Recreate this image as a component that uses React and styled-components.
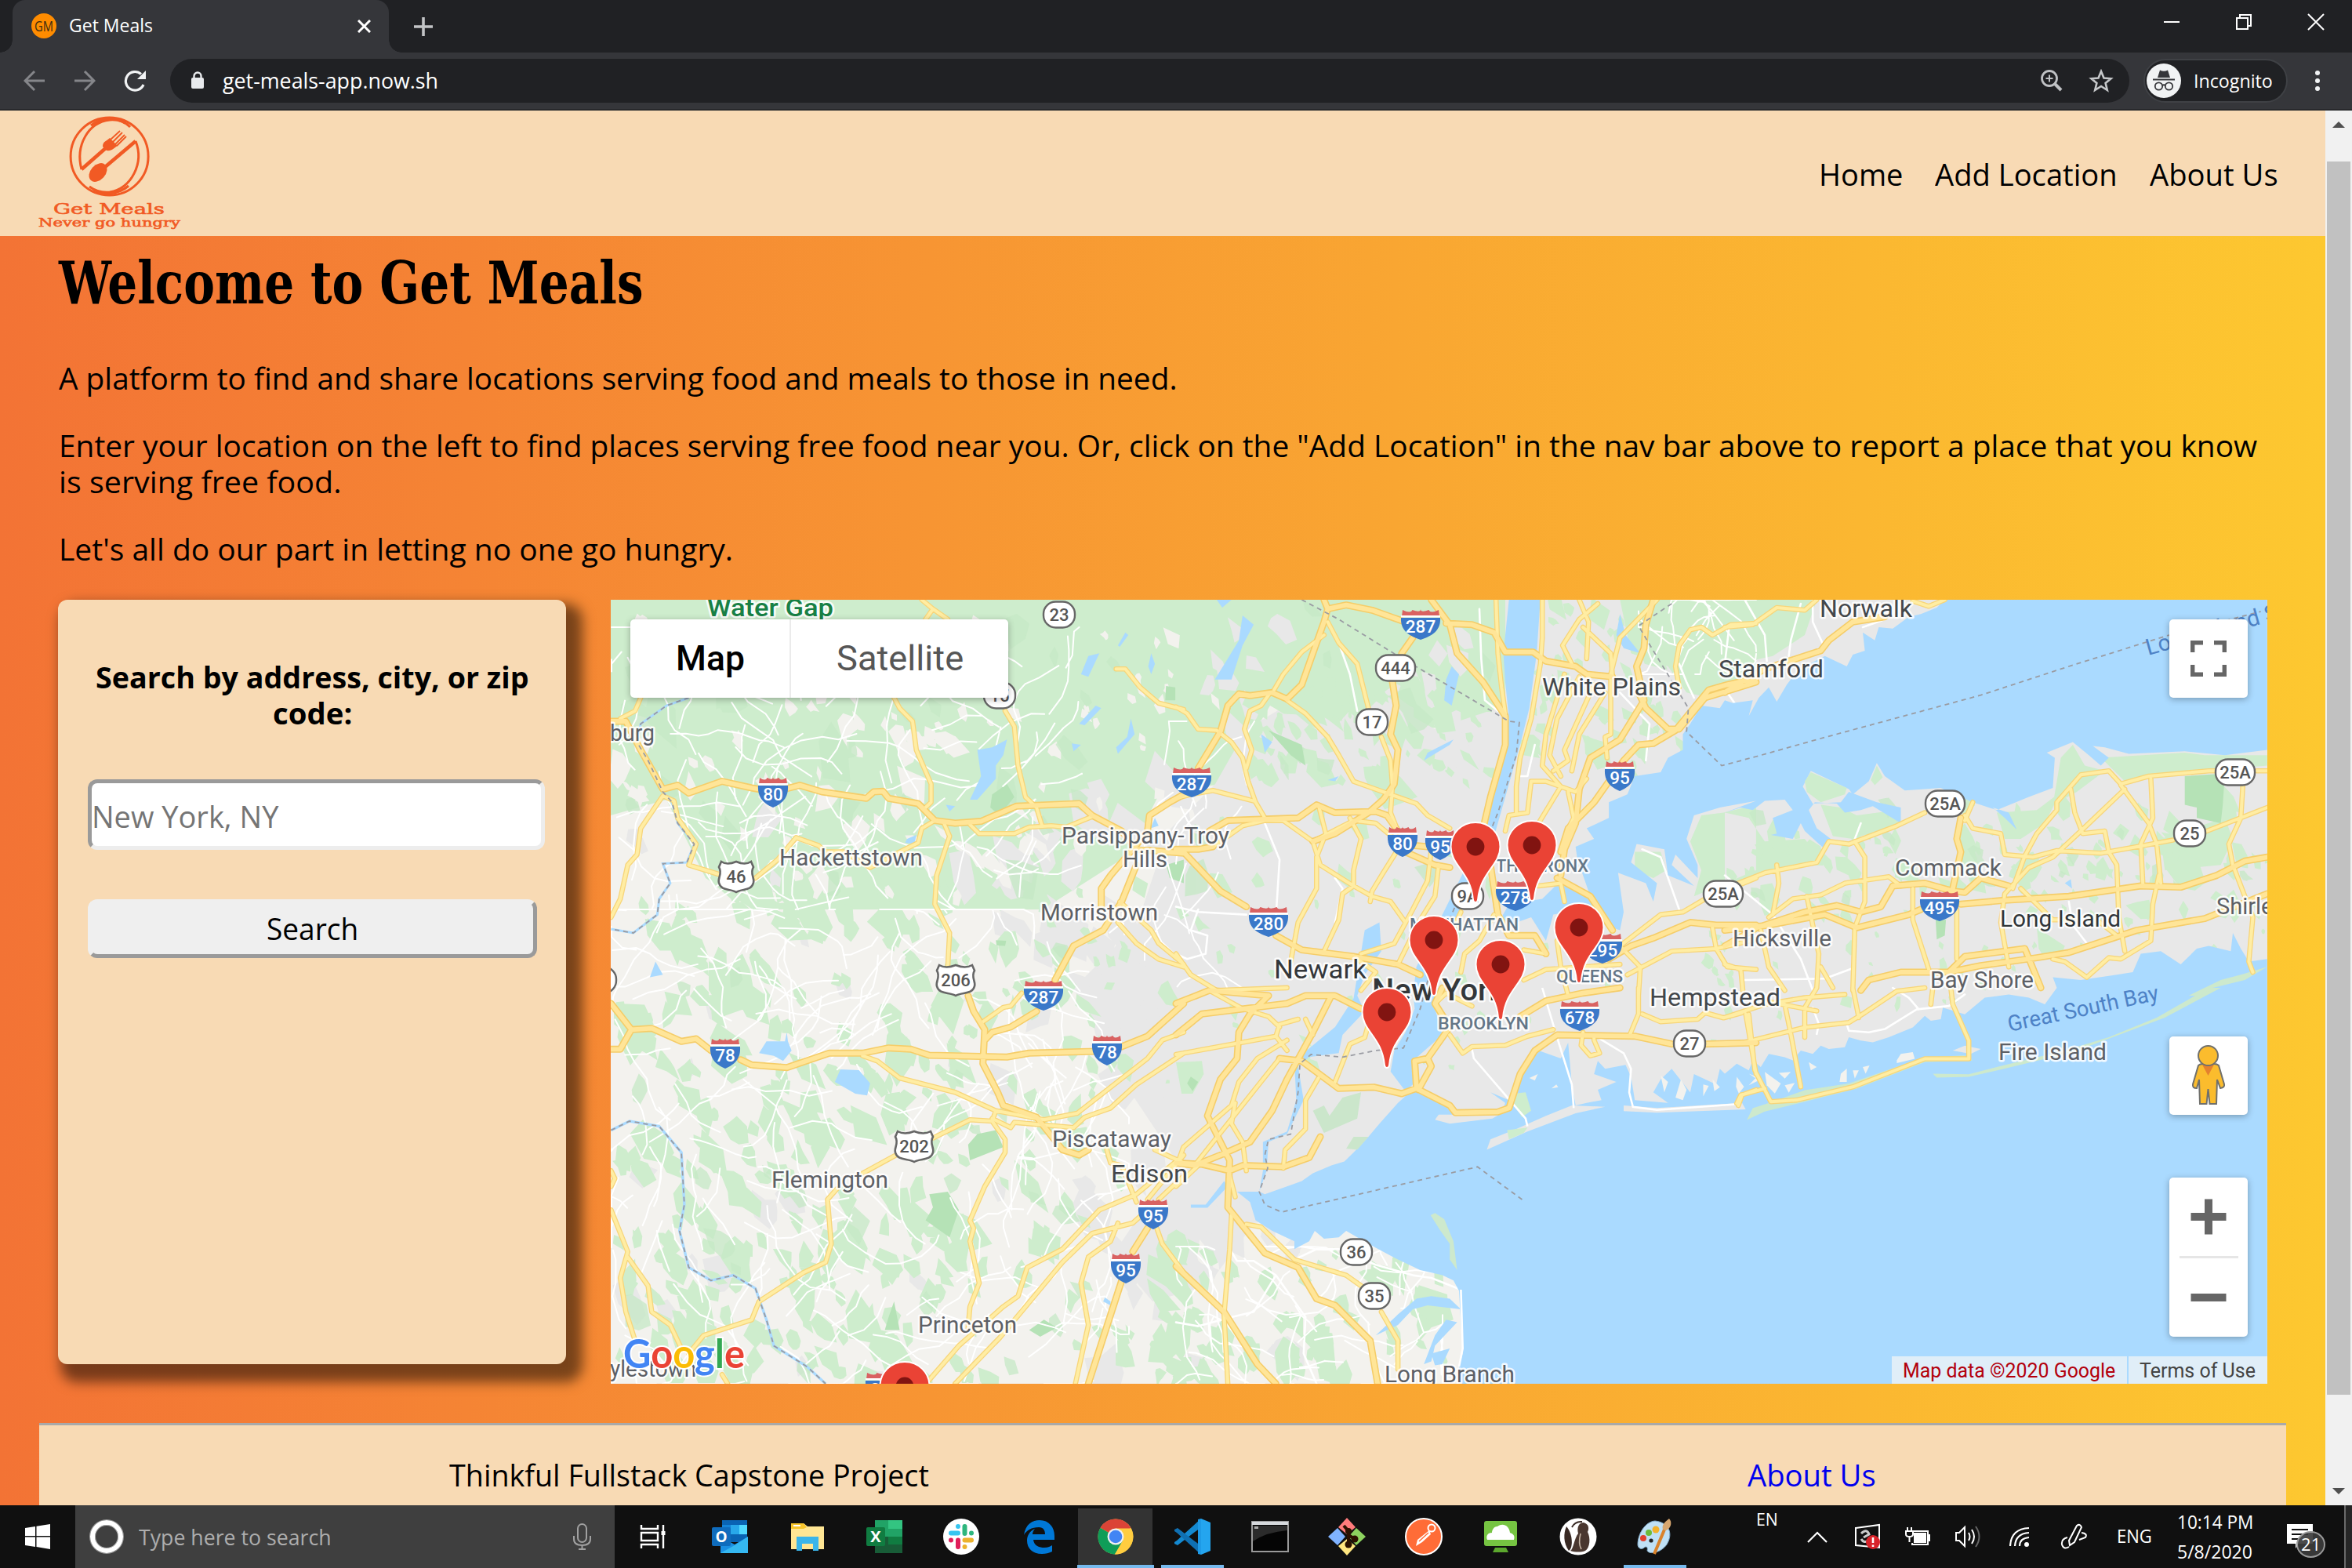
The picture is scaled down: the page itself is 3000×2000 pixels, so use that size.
import React, { useLayoutEffect, useRef, useState } from "react";
import styled, { createGlobalStyle, css } from "styled-components";

const UI = `"Open Sans", "Noto Sans", sans-serif`;
const MAPFONT = `Roboto, "Liberation Sans", sans-serif`;
const cream = "#f8dab4";

const Global = createGlobalStyle`
  html, body { margin: 0; padding: 0; }
  body { width: 3000px; height: 2000px; overflow: hidden; background: #202124; font-family: ${UI}; }
  * { box-sizing: border-box; }
`;

/* ---------- text that keeps a given measure ---------- */
const FitBox = styled.span`
  display: inline-block;
  white-space: nowrap;
  width: ${(p) => p.$w}px;
  text-align: left;
  vertical-align: top;
`;
const FitInner = styled.span`
  display: inline-block;
  transform-origin: 0 50%;
`;
function Fit({ w, children }) {
  const ref = useRef(null);
  const [s, setS] = useState(1);
  useLayoutEffect(() => {
    if (ref.current) setS(w / ref.current.offsetWidth);
  }, [w]);
  return (
    <FitBox $w={w}>
      <FitInner ref={ref} style={{ transform: `scaleX(${s})` }}>{children}</FitInner>
    </FitBox>
  );
}

/* ---------- browser frame ---------- */
const Screen = styled.div`
  width: 3000px;
  height: 2000px;
  display: flex;
  flex-direction: column;
  overflow: hidden;
`;
const TabStrip = styled.div`
  height: 67px;
  background: #202124;
  display: flex;
  padding-left: 16px;
  flex: none;
`;
const Tab = styled.div`
  width: 480px;
  height: 67px;
  background: #35363a;
  border-radius: 16px 16px 0 0;
  display: flex;
  align-items: center;
  padding: 0 23px 1px 24px;
  position: relative;
  color: #fff;
  font-size: 23px;
  line-height: 64px;
  &::before, &::after {
    content: "";
    position: absolute;
    bottom: 0;
    width: 16px;
    height: 16px;
  }
  &::before { left: -16px; background: radial-gradient(circle at 0 0, transparent 15.5px, #35363a 16px); }
  &::after { right: -16px; background: radial-gradient(circle at 100% 0, transparent 15.5px, #35363a 16px); }
`;
const TabTitle = styled.span`
  margin-bottom: 3px;
`;
const Favicon = styled.span`
  width: 32px;
  height: 32px;
  border-radius: 50%;
  background: #ff8c00;
  color: #3c2a10;
  font: 19px/32px ${UI};
  margin-right: 16px;
  display: flex;
  justify-content: center;
`;
const Grow = styled.span`
  flex: 1;
`;
const NewTab = styled.div`
  width: 88px;
  display: flex;
  align-items: center;
  justify-content: center;
`;
const WindowButtons = styled.div`
  display: flex;
  align-items: center;
  height: 56px;
`;
const WindowButton = styled.div`
  width: 92px;
  display: flex;
  justify-content: center;
`;
const Toolbar = styled.div`
  height: 74px;
  flex: none;
  background: #35363a;
  border-bottom: 2px solid #28292c;
  display: flex;
  align-items: center;
  padding-left: 12px;
`;
const ToolButton = styled.div`
  width: 64px;
  display: flex;
  justify-content: center;
`;
const UrlBar = styled.div`
  margin-left: 13px;
  width: 2499px;
  height: 56px;
  border-radius: 28px;
  background: #202124;
  display: flex;
  align-items: center;
  padding: 0 20px 0 26px;
  color: #fff;
  font-size: 27px;
  line-height: 52px;
  gap: 23px;
`;
const UrlIcons = styled.div`
  display: flex;
  gap: 32px;
  align-items: center;
`;
const Incognito = styled.div`
  margin-left: 18px;
  width: 184px;
  height: 56px;
  border-radius: 28px;
  background: #202124;
  border: 2px solid #3f4145;
  display: flex;
  align-items: center;
  color: #fff;
  font-size: 23px;
  line-height: 48px;
  gap: 16px;
  padding-left: 2px;
`;
const Dots = styled.div`
  width: 76px;
  display: flex;
  flex-direction: column;
  gap: 4px;
  align-items: center;
`;
const Dot = styled.i`
  width: 6px;
  height: 6px;
  border-radius: 50%;
  background: #f1f3f4;
`;

/* ---------- page ---------- */
const Viewport = styled.div`
  height: 1779px;
  flex: none;
  display: flex;
  overflow: hidden;
`;
const Page = styled.div`
  width: 2966px;
  background: linear-gradient(to right, #f37335, #fdc830);
  display: flex;
  flex-direction: column;
  overflow: hidden;
`;
const Header = styled.header`
  height: 160px;
  flex: none;
  background: ${cream};
  display: flex;
  justify-content: space-between;
  padding: 0 60px 0 44px;
`;
const Nav = styled.nav`
  display: flex;
  gap: 41px;
  padding-top: 54px;
  font-size: 38px;
  line-height: 54px;
  color: #000;
`;
const Main = styled.main`
  padding: 15px 74px 0 75px;
  flex: none;
  height: 1514px;
`;
const Title = styled.h1`
  margin: 0;
  height: 143px;
  font: bold 75px/91px "DejaVu Serif", serif;
`;
const Para = styled.p`
  margin: 0 0 ${(p) => p.$gap || 40}px;
  font-size: 38px;
  line-height: 46px;
  display: flex;
  flex-direction: column;
`;
const Columns = styled.div`
  display: flex;
  gap: 57px;
  margin-left: -1px;
`;
const Card = styled.section`
  width: 648px;
  height: 975px;
  border-radius: 12px;
  background: ${cream};
  box-shadow: 12px 14px 16px 9px rgba(0, 0, 0, 0.51);
  padding: 75px 27px 0 38px;
  display: flex;
  flex-direction: column;
  align-items: flex-start;
`;
const CardLabel = styled.label`
  width: 573px;
  margin-bottom: 62px;
  font-size: 38px;
  font-weight: 700;
  line-height: 46px;
  display: flex;
  flex-direction: column;
  align-items: center;
`;
const field = css`
  font-family: ${UI};
  font-size: 38px;
  border-radius: 12px;
  border-width: 5px;
`;
const Field = styled.div`
  ${field}
  width: 583px;
  height: 90px;
  background: #fff;
  border-style: solid;
  border-color: #9a9a9a #ededed #ededed #9a9a9a;
  color: #757575;
  line-height: 84px;
`;
const SearchButton = styled.button`
  ${field}
  width: 573px;
  height: 75px;
  margin-top: 63px;
  padding: 0;
  background: #efefef;
  border-style: solid;
  border-color: #efefef #9a9a9a #9a9a9a #efefef;
  color: #000;
  line-height: 63px;
`;
const MapBox = styled.section`
  width: 2113px;
  height: 1000px;
  position: relative;
  overflow: hidden;
`;
const Footer = styled.footer`
  margin: 0 50px;
  height: 140px;
  flex: none;
  border-top: 3px solid #a9a9a9;
  background: ${cream};
  display: flex;
  padding: 36px 523px 0 523px;
  justify-content: space-between;
  font-size: 38px;
  line-height: 54px;
`;
const FooterLink = styled.a`
  color: #0000ee;
`;
const Scrollbar = styled.div`
  width: 34px;
  background: #f1f1f1;
  display: flex;
  flex-direction: column;
  align-items: center;
`;
const Arrow = styled.i`
  width: 0;
  height: 0;
  border: 8px solid transparent;
  ${(p) => (p.$up ? "border-bottom-color:#505050; border-top:0; margin: 14px 0 43px;" : "border-top-color:#505050; border-bottom:0; margin-top:119px;")}
`;
const Thumb = styled.div`
  width: 30px;
  height: 1573px;
  background: #c1c1c1;
`;

/* ---------- map controls ---------- */
const Control = styled.div`
  position: absolute;
  background: #fff;
  border-radius: 5px;
  box-shadow: 0 2px 8px rgba(0, 0, 0, 0.3);
  display: flex;
  align-items: center;
  justify-content: center;
  ${(p) => css`top: ${p.$top}px; height: ${p.$h || 100}px;`}
`;
const TypeControl = styled(Control)`
  left: 25px;
  width: 482px;
`;
const MapType = styled.div`
  height: 100px;
  width: ${(p) => p.$w}px;
  display: flex;
  justify-content: center;
  font: ${(p) => (p.$on ? 500 : 400)} 45px/100px ${MAPFONT};
  color: ${(p) => (p.$on ? "#000" : "#565656")};
  ${(p) => p.$on && "border-right: 2px solid #ebebeb;"}
`;
const SideControl = styled(Control)`
  right: 25px;
  width: 100px;
  flex-direction: column;
`;
const ZoomHalf = styled.div`
  flex: 1;
  display: flex;
  align-items: center;
`;
const ZoomRule = styled.div`
  width: 75px;
  height: 3px;
  background: #e6e6e6;
`;
const Credits = styled.div`
  position: absolute;
  right: 0;
  bottom: 0;
  height: 35px;
  display: flex;
  gap: 2px;
  font: 25px/38px ${MAPFONT};
`;
const Credit = styled.span`
  background: rgba(245, 245, 245, 0.72);
  color: ${(p) => p.$c};
  padding: 0 15px 0 14px;
  height: 35px;
`;

/* ---------- map drawing ---------- */
const sheets = {
  A: [770, 750, 0.4719, 0.3333],
  B: [1500, 750, 0.4719, 0.3333],
  C: [2200, 750, 0.5102, 0.3333],
  D: [770, 1260, 0.4719, 0.3333],
  E: [1500, 1260, 0.4719, 0.3333],
  F: [2200, 1260, 0.5102, 0.4209],
};
function trace(str, close) {
  let t = sheets.A;
  const out = [];
  str.trim().split(/\s+/).forEach((tok) => {
    if (sheets[tok]) { t = sheets[tok]; return; }
    const [x, y] = tok.split(",").map(Number);
    out.push(`${(t[0] + x * t[2]).toFixed(1)} ${(t[1] + y * t[3]).toFixed(1)}`);
  });
  return "M" + out.join("L") + (close ? "Z" : "");
}
const group = (sheet, str) => str.split(";").map((s) => trace(`${sheet} ${s}`)).join("");

function rng(seed) {
  let s = seed;
  return () => {
    s = (s * 1664525 + 1013904223) % 4294967296;
    return s / 4294967296;
  };
}
function patches(seed, n, [x0, y0, x1, y1], r0, r1) {
  const r = rng(seed);
  let d = "";
  for (let i = 0; i < n; i++) {
    const cx = x0 + r() * (x1 - x0);
    const cy = y0 + r() * (y1 - y0);
    const rad = r0 + r() * r() * (r1 - r0);
    const k = 4 + Math.floor(r() * 5);
    const tilt = r() * 3;
    const pts = [];
    for (let j = 0; j < k; j++) {
      const a = (j / k) * 6.283;
      const q = rad * (0.4 + r() * 0.8);
      const px = Math.cos(a) * q * 0.75;
      const py = Math.sin(a) * q * 1.25;
      pts.push(`${(cx + px * Math.cos(tilt * 0.3) + py * Math.sin(tilt * 0.3)).toFixed(1)} ${(cy - px * Math.sin(tilt * 0.3) + py * Math.cos(tilt * 0.3)).toFixed(1)}`);
    }
    d += "M" + pts.join("L") + "Z";
  }
  return d;
}
function lanes(seed, n, [x0, y0, x1, y1], len) {
  const r = rng(seed);
  let d = "";
  for (let i = 0; i < n; i++) {
    let x = x0 + r() * (x1 - x0);
    let y = y0 + r() * (y1 - y0);
    let a = r() * 6.283;
    d += `M${x.toFixed(1)} ${y.toFixed(1)}`;
    const k = 3 + Math.floor(r() * 6);
    for (let j = 0; j < k; j++) {
      a += (r() - 0.5) * 1.1;
      const l = len * (0.4 + r());
      x = Math.min(x1, Math.max(x0, x + Math.cos(a) * l));
      y = Math.min(y1, Math.max(y0, y + Math.sin(a) * l));
      d += `L${x.toFixed(1)} ${y.toFixed(1)}`;
    }
  }
  return d;
}

const water = [
  "C 550,45 530,75 490,100 460,110 420,155 385,150 375,200 345,170 350,240 320,255 305,300 250,260 200,300 170,340 155,370 130,435 110,380 85,420 60,490 70,430 20,440 0,430 B 1470,460 1420,450 1390,520 1370,560 1370,620 1330,650 1310,705 1240,720 1220,790 1170,820 1170,880 1110,920 1130,960 1080,990 1085,1040 1100,1100 1120,1180 1040,1120 990,1190 900,1210 880,1260 900,1290 960,1260 1000,1350 1020,1250 1100,1230 1160,1290 1200,1310 1210,1240 1195,1090 1270,1130 1290,1200 1300,1130 1230,1050 1245,980 1320,1000 1330,1100 1400,1140 1340,1060 1350,1020 1410,1110 1410,1060 1380,960 1400,870 1470,840 1568,815 C 0,860 40,840 70,850 100,815 150,810 170,850 120,880 130,940 115,945 170,960 190,900 200,930 250,1000 265,960 230,920 210,850 225,820 280,825 300,860 340,850 370,835 440,900 440,840 380,820 310,780 290,820 220,825 195,760 215,700 310,770 320,790 360,740 380,670 400,720 450,775 500,770 540,765 560,780 620,820 680,850 760,800 820,765 825,650 805,630 870,590 910,640 940,680 960,650 920,605 950,610 1010,635 1150,625 1250,640 1356,620 1356,45",
  "C 1356,1420 1310,1430 1290,1380 1270,1320 1265,1390 1210,1370 1180,1380 1140,1440 1090,1390 1040,1400 1020,1470 980,1480 890,1500 820,1490 830,1530 F 800,50 760,30 710,20 650,30 600,80 545,60 540,95 515,100 500,85 470,120 410,150 370,165 340,160 310,150 300,180 260,185 240,175 220,200 190,190 170,220 150,210 110,200 90,240 70,220 60,250 30,230 0,260 E 1470,310 1460,370 1400,330 1390,400 1340,310 1310,350 1290,400 1330,440 1240,430 1230,340 1215,295 1160,310 1140,280 1130,330 1190,360 1140,390 1150,430 1110,440 1080,450 1070,370 1060,210 1040,270 980,240 950,300 920,370 900,430 850,400 890,440 880,480 855,500 740,520 700,505 710,485 750,485 720,440 650,390 610,410 620,415 600,440 550,520 520,570 480,630 455,665 420,680 370,710 340,740 300,760 240,790 225,780 165,780 200,820 215,890 260,930 320,970 320,1000 360,970 375,930 400,960 440,955 460,930 520,980 600,1040 660,1080 720,1100 750,1120 765,1160 775,1400 765,1450 770,1520 F 1356,1200",
  "B 900,45 985,45 975,250 955,460 930,600 910,700 880,850 860,950 830,1000 780,1200 700,1400 690,1560 640,1560 650,1450 720,1250 790,1050 850,850 880,650 900,500 890,360 885,250",
  "B 510,1310 550,1280 555,1390 510,1480 490,1560 E 510,90 450,180 440,250 360,265 330,300 345,430 300,560 250,590 245,700 225,780 235,700 235,590 300,550 325,430 320,280 370,220 430,150 480,40",
  "E 640,0 720,0 700,80 720,180 640,280 640,370 620,395 580,320 590,240 620,170 645,80",
  "E 680,1215 640,1230 600,1290 540,1330 600,1250 650,1190 690,1180 740,1190 770,1230",
  "E 730,1270 760,1280 700,1370 690,1430 670,1440 700,1330",
  "E 690,1400 740,1380 720,1440 700,1445",
  "A 1310,260 1340,250 1310,340 1290,330", "A 1010,620 1050,610 1090,580 1080,640 1060,680 1060,730 1010,810 990,810 1020,720",
  "A 1330,450 1345,460 1300,525 1285,520", "A 1425,500 1435,560 1390,635 1385,610 1415,570", "A 1480,250 1490,290 1480,330 1472,300", "A 1410,170 1418,180 1395,225 1390,220",
  "A 820,960 845,945 840,980 815,975", "A 140,1430 160,1480 125,1490", "A 1490,880 1500,910 1478,920", "A 925,830 950,835 935,855", "A 1265,595 1290,600 1270,625",
  "B 180,105 210,140 180,220 150,350 105,350 140,270 170,200", "B 745,300 765,330 745,450 725,430 730,350", "B 750,580 740,600 670,660 680,630", "B 1200,100 1215,180 1255,250 1210,230 1190,180", "B 230,560 260,590 240,630", "B 110,45 150,45 125,75", "B 410,735 440,720 430,740",
  "D 440,205 490,205 495,170 498,205 508,240 485,280 460,260 420,250", "D 640,312 690,315 720,365 712,412 680,405 625,360",
  "D 1355,1185 1370,1200 1370,1215 1350,1200",
  "C 670,840 710,860 730,925 700,880", "C 865,1115 868,1150 850,1130",
  "E 40,830 80,830 130,740 140,760 85,842 40,842",
];
const islands = [
  ["#e8e8e8", "E 840,620 850,580 920,540 1000,490 1070,450 1160,455 1080,480 950,550"],
  ["#ceedcd", "E 895,545 950,535 940,555 900,580"],
  ["#e8e8e8", "E 1210,450 1300,460 1530,440 1540,465 1300,478 1210,472"],
  ["#cde9cd", "F 55,400 70,365 120,345 200,310 310,290 500,210 600,205 620,220 500,225 330,305 200,345 100,375"],
  ["#cde9cd", "F 520,260 610,262 680,240 850,190 960,150 1080,90 1210,0 1240,0 1100,90 980,145 870,195 700,245 610,270 530,272"],
  ["#cde9cd", "C 1160,1560 1240,1500 1290,1480 1356,1450 1300,1500 1220,1530 1190,1560"],
  ["#cde9cd", "E 688,870 700,862 725,885 750,970 760,1080 740,1040 740,980 715,930"],
  ["#f3f2ee", "F 430,220 440,200 470,195 475,215 430,228"],
  ["#e8e8e8", "F 570,190 600,175 640,185 615,200"],
  ["#f3f2ee", "F 290,260 305,245 305,285 287,285"],
  ["#f3f2ee", "F 210,225 230,240 215,250"],
  ["#f3f2ee", "F 320,250 335,250 325,275"],
  ["#f3f2ee", "F 345,240 362,235 352,260"],
  ["#f3f2ee", "F 100,255 140,290 125,320 105,295"],
  ["#f3f2ee", "F 60,260 85,280 60,295 80,270"],
  ["#f3f2ee", "F 135,258 165,255 150,275"],
  ["#f3f2ee", "F 150,295 175,288 160,318"],
  ["#f3f2ee", "F 30,270 48,300 35,320 28,300"],
  ["#f3f2ee", "E 955,345 978,330 970,355"],
  ["#f3f2ee", "E 1015,385 1028,370 1033,380"],
  ["#f3f2ee", "E 1310,335 1330,360 1320,400"],
  ["#f3f2ee", "E 1365,350 1380,390 1370,430 1350,420"],
  ["#f3f2ee", "E 1450,350 1470,380 1455,395"],
  ["#f3f2ee", "E 1425,370 1440,375 1425,415"],
  ["#ceedcd", "C 200,740 215,705 305,765 300,790 240,820 205,780"],
  ["#ceedcd", "C 365,735 380,680 395,725 375,755"],
  ["#ceedcd", "E 910,405 945,400 960,470 935,495 915,450"],
  ["#cbe6cb", "E 500,400 490,500 400,555 370,470 400,450 415,490 450,420"],
  ["#cbe6cb", "E 480,570 520,570 490,620 460,615"],
];
const parks = [
  "E 0,285 70,280 75,330 45,405 15,405",
  "C 780,1300 850,1370 840,1410 800,1420 785,1380",
  "C 840,650 870,600 900,680 950,700 880,780 820,830",
  "C 940,650 1150,630 1200,640 1356,640 1356,680 1200,700 1000,740",
  "C 0,860 60,880 100,970 200,960 240,1040 120,1090 0,1140",
  "C 240,830 290,840 330,870 430,850 440,900 320,960 270,950",
  "B 1568,830 1480,860 1420,870 1390,970 1420,1080 1400,1180 1568,1080",
  "C 1090,960 1250,880 1270,960 1240,1060 1100,1080",
  "C 680,860 780,850 840,780 800,900 740,960 700,960",
  "B 1200,45 1568,45 1568,330 1440,420 1380,400 1330,300 1230,250",
  "C 0,45 230,45 200,180 120,260 0,300",
  "B 1240,1010 1310,1010 1325,1080 1290,1110 1240,1080",
  "E 660,1230 740,1220 750,1270 690,1300 660,1350 650,1290",
];
const deepParks = [
  "C 1150,720 1250,710 1245,830 1240,900 1180,880 1180,840 1150,830",
  "C 527,1270 553,1270 550,1330 530,1345",
  "D 880,790 930,780 960,850 935,955 870,890 890,840",
  "D 1010,560 1060,545 1080,610 990,660 985,600",
  "D 785,1200 800,1310 760,1310 770,1260",
  "D 1190,1270 1225,1300 1180,1335 1150,1310",
  "B 250,545 340,600 350,680 310,640",
  "A 1050,790 1090,750 1110,800 1070,870 1045,840",
  "A 1060,1348 1088,1350 1085,1370 1062,1368",
  "A 1520,1060 1568,1040 1568,1130 1530,1110",
  "E 40,340 60,360 45,395 30,365",
  "A 1520,375 1545,380 1545,430 1518,430",
];
const roads = [
  ["A", "20,1260 45,1190 65,1060 90,1020 100,920 160,795 190,815 200,880 250,980 230,1060 310,1095;410,1110 470,1040 520,955 580,985 600,1010 650,1010 720,1070 800,1010 850,975 860,920 895,890;785,420 800,460 835,510 845,620 885,750 885,820 870,840;920,900 935,950 900,1100 895,1210 935,1320 930,1450;860,45 890,80 930,120;870,120 890,80;1085,470 1110,530 1120,680 1140,800 1170,840 1185,910;990,905 1015,940 1110,940 1150,915 1210,910 1250,915 1320,875;1385,310 1410,310 1450,380 1500,440 1568,465;1395,1200 1480,1310 1500,1360 1568,1440;1390,1280 1440,1360 1500,1420 1568,1450;45,500 85,470 100,420"],
  ["B", "0,455 30,480 60,540 110,545 150,590 180,650 195,740 215,820 240,880;265,390 290,330 340,245 400,180;410,130 440,210 490,290 520,460;555,570 580,660 585,760 580,860 600,930;300,430 350,480 410,570 440,640 480,740 560,780 650,825 680,870 740,920;255,400 230,450 200,470 185,540 205,620 190,690;0,805 40,790 100,775 210,815;60,1000 100,990 180,910 240,890 290,890 370,970 480,890 540,900 600,970;370,970 390,1060 480,1140 530,1180 580,1200 620,1280;385,830 405,940 380,1030 380,1150 330,1280 310,1430;470,880 500,960 480,1080 480,1140 450,1170 440,1270 400,1390;600,1000 560,1090 530,1160 525,1200;690,1000 680,1120 640,1230 590,1360 500,1400;710,1060 700,1180 660,1270 600,1440;865,45 870,250 880,380 890,480;990,45 990,190 985,290 960,500 930,650 920,760 920,860;1090,45 1115,130 1110,270;1140,60 1090,120 1045,220 1070,290;1100,150 1175,250 1180,340;1300,45 1200,190 1175,330 1175,560 1160,570 1165,650;1568,135 1500,140 1450,180 1420,150 1390,160 1360,220 1350,300 1360,380;1050,330 1000,560 990,680 1040,760 980,900;1090,340 1030,500 1010,640 1040,720;1130,370 1050,620 1060,660 1020,700;1160,400 1090,560 1070,700;1060,780 1075,880 1060,920;960,740 1000,740 1080,780 1110,730;960,740 950,860 900,870 890,930;980,1140 1040,1130 1050,1200;770,1240 740,1330;860,1250 820,1350 780,1400 770,1470;1000,1400 940,1385;1568,1110 1430,1190 1370,1240 1310,1250 1200,1370;1568,1345 1460,1380 1340,1390 1220,1480;1450,1300 1460,1380 1490,1450 1568,1460;940,1500 1000,1460 1100,1450 1200,1440;1030,1350 1040,1450 1060,1560;1200,1370 1255,1450 1250,1560;0,1400 40,1480 110,1540 300,1530;480,1410 540,1470 500,1540"],
  ["C", "0,150 70,140 130,75 200,85 230,45;470,50 510,70 550,45;0,1150 100,1090 230,1050 260,970 310,980 430,910 500,860;600,870 620,920 690,940 700,1020 770,1030 830,1005 940,1015 1050,985 1120,965;1205,930 1356,840;620,820 600,890;750,1025 780,940 830,850 830,820 890,715 960,700 990,750 1060,720 1210,700 1240,700;1330,700 1356,700;990,755 1060,900 1080,980 1090,1130;865,770 875,860 895,940 950,930 960,1010 980,1060 985,1260 1000,1390;1000,770 890,930 820,1030 760,1070 700,1170 690,1280 710,1450;750,1025 720,1150;1065,730 1070,880 1040,980 1045,1130;1295,760 1290,880 1260,980 1270,1060 1320,1260 1310,1430 1320,1470;110,1260 170,1190 240,1175 300,1130 410,1105 440,1140;580,1230 580,1420;470,1150 470,1270 510,1460;325,970 350,1030 350,1200 325,1300 320,1540;205,1180 235,1400 230,1530;130,1060 135,1130 120,1250;90,1310 110,1450 150,1540;820,1420 850,1430 905,1490 960,1415 990,1420 1065,1350 1070,1210 1085,1100;0,1440 40,1460 45,1540;240,1450 270,1530;740,1150 820,1270 870,1270;930,1270 980,1330"],
  ["F", "0,170 50,165 200,120 310,105 350,75 430,10 500,0;60,80 75,250 115,345 180,340 320,300 500,215 610,215 610,160 570,50 565,0;150,50 165,140 190,300;0,90 100,50 200,30 300,20;200,150 200,60 230,0;30,350 40,325 100,305;320,0 335,90;515,50 520,0;100,40 230,70"],
  ["D", "700,260 740,280 800,345 950,400 1060,470 1190,505 1280,480 1470,270 1510,200 1568,170;1025,130 1080,75 1100,70 1130,20;890,575 990,505 1050,510 1060,470;1050,510 1085,580 1085,630 1030,760 990,890 1000,920 990,970 1015,1130 990,1220 985,1300;1050,500 1100,535 1110,515 1270,535 1300,495 1370,460 1440,370 1568,250;700,710 790,640;630,770 605,810 615,980 600,1050 540,1090 420,1200 400,1270 270,1330 230,1400;20,700 30,730 20,760;20,850 65,1010 45,1110 60,1240 85,1350;65,1030 120,1140 130,1240 180,1290 210,1380;320,1480 335,1515;880,1500 960,1370 1080,1220 1120,1180 1145,1070 1240,1000 1340,850 1440,790 1568,640;950,1515 1070,1340 1240,1050 1320,940 1430,900 1470,850;1275,1515 1310,1290 1290,1130 1310,1030 1370,970 1390,900;1495,920 1510,980 1568,1090;1360,620 1370,670 1400,680 1440,820;1500,810 1568,720;1490,620 1568,670;1470,810 1568,640"],
  ["E", "0,255 270,185 280,140 330,120;270,185 300,240;10,650 20,610 150,450 170,360 220,270 300,200;430,360 470,215 510,190 520,140;385,345 350,430 350,540 295,620 290,690;150,870 145,1000 130,1250 140,1515;190,905 230,915 320,1040 460,1100 500,1140;555,1240 600,1350 600,1460;740,180 775,250 800,225 890,220 950,185 1020,160;1250,0 1250,100 1225,185;1260,100 1310,130 1410,120 1430,95 1480,115 1530,95;1540,100 1568,330;1100,170 1095,220 1120,260 1145,250 1130,200 1130,180;1520,450 1530,410 1568,390;50,680 280,270;140,690 160,800;190,700 180,590 150,520 160,440;350,120 370,180;0,760 60,680;90,10 180,80 250,110 280,150;700,60 730,20 800,70"],
];
const highways = [
  ["A", "20,510 60,510 100,620 160,770 200,755 230,785 320,740 400,765 460,780 530,755 590,780 710,805 730,780 755,778 770,805 850,825 895,890 950,900 1020,893 1115,835 1285,825 1320,870 1400,930 1440,1000 1568,1015;1568,790 1530,820 1475,870 1470,930 1430,1000 1370,1100 1345,1150 1345,1220;1440,1060 1400,1200 1350,1310 1270,1370 1220,1500"],
  ["B", "60,690 90,620 120,550 140,450 170,405 200,412 260,400 300,425 340,370 370,250 400,130 410,80 400,45;410,80 460,65 530,85 600,120 640,140;610,250 640,190;585,360 595,450 580,560 600,620 590,750 560,810 520,860 430,940 370,970;730,135 800,140 860,170 890,245 965,245 1000,280 1080,300 1110,330 1180,340;690,45 740,140 760,250 830,360 890,490 890,600 850,800 830,920;90,930 140,890 330,880 380,830 430,860 540,855 570,870 600,930;0,1000 60,1000 100,990;20,1010 60,1070 120,1160 190,1220;270,1330 340,1385 480,1410 600,1440 660,1480;620,1010 700,1060 740,1070;640,985 680,990;1290,45 1270,140 1265,230 1245,300 1265,430 1200,580 1120,650 1090,770 1080,900 1050,1000 1040,1100;1568,360 1500,390 1430,420 1360,540 1330,540 1270,460 1250,400;1568,345 1490,370 1440,390 1350,545 1290,595 1250,600 1210,660 1130,820 1060,920 1040,1010;850,1060 870,1250 900,1330 970,1330 1000,1400;1030,1110 1120,1180 1180,1310;1568,1290 1460,1290 1390,1280 1290,1340 1230,1370 1170,1420"],
  ["C", "0,400 30,370 100,310 180,270 240,240 260,200 320,130 400,110;590,880 580,960 590,1010 570,1150;590,1210 700,1195 860,1180 1040,1140 1140,1145 1230,1100 1300,1045 1356,1030;0,1310 110,1290 250,1250 330,1300 460,1250 490,1230;0,1370 80,1300 200,1240 280,1215 340,1240 390,1220 420,1140 500,1130 570,1160 600,1165 640,1110 710,1140;560,1470 600,1410 750,1380 790,1530;340,1540 360,1500 440,1470 560,1470 640,1445 780,1415 860,1395 1030,1310 1200,1265 1356,1170"],
  ["D", "20,60 75,160 130,155 210,205 250,195 290,240;20,235 45,235 75,160;370,275 400,295 495,305 610,250 700,250 770,230 830,235 880,258 1090,265 1150,250 1330,243;1400,225 1470,185 1568,60;985,30 1000,90 1030,160 1025,290 1065,400 1080,450 1170,495 1240,620 1285,640 1310,620;1030,200 1050,170 1100,150 1170,90;1310,1515 1400,1120;1430,1010 1470,920"],
  ["E", "0,60 90,10 250,30;0,180 70,100 300,60 350,30 430,30 500,80;250,30 200,100 170,170 165,270 120,350 85,490 145,660 140,840 180,910 240,1015 330,1070 380,1190 430,1215 525,1350 545,1515;420,30 370,170 300,350 260,470 200,590 120,640 50,680 0,670;280,270 340,280 440,385 535,380 610,405 650,385 740,450 755,478 870,475 900,460 930,330 970,240 1030,180 1240,185 1340,215;1430,215 1568,210;0,670 70,675 145,700 180,680 290,685 360,650 390,570;0,1065 130,1240 220,1440 270,1515;650,380 645,280 680,270 690,300 655,390;680,270 740,150 700,60 720,0;930,110 1000,50 1100,20 1200,0"],
];
const whiteRoads = [
  ["E", "150,1010 165,1045 210,1045 270,1100 350,1260;320,1040 380,1000 440,1000 540,1060 640,1100 690,1110 770,1155;0,1280 60,1295 150,1260 210,1240 270,1100;350,1260 345,1400 380,1515"],
  ["B", "820,80 825,270 835,430 870,470;440,210 470,330 490,470;240,900 280,1040 270,1260 260,1330;430,1110 450,1150 430,1280;1568,560 1490,400;1360,290 1380,360 1400,420;1260,1000 1310,1030 1360,1230;970,600 950,720 930,720;0,1220 60,1240 190,1250;0,1400 30,1420 80,1400 85,1330 40,1310 60,1230;1200,400 1280,520 1270,660"],
  ["C", "10,160 0,290;50,45 100,180 105,280;190,60 165,200 160,260;220,45 220,130 250,230;345,150 400,120;0,1100 120,1250 190,1420 220,1540;50,1500 250,1495 320,1455;320,980 340,900;860,1200 870,1290 905,1360"],
  ["F", "305,110 310,130 360,135 400,125 480,65 560,55 600,20;220,60 235,110 230,140;420,0 460,30 485,65;610,220 615,260"],
];
const causeways = "800,235 805,270 890,410 945,500 950,530;990,0 1030,190 1070,370 1075,460;1140,190 1210,250 1230,310 1225,400 1235,455 1300,467 1520,445;770,1155 775,1380 765,1450";
const dashed = [
  "A 230,420 170,450 100,520 90,590 120,660 160,780 185,820 200,900 245,980 225,1050 160,1055 180,1130 150,1190 145,1250 80,1320 20,1305",
  "B 340,45 440,120 600,260 780,410 900,510 928,515 920,640 870,860 830,1000 760,1200 700,1400 E 660,80 615,230 540,240 450,265 365,255 335,290 330,400 310,560 250,580 240,640 248,690 225,780 240,830 285,858 815,685 940,815",
  "B 1340,60 1250,145 1290,240 1385,460 1380,550 1475,680 1568,645 C 230,580 640,410 860,300 1100,185 1340,90",
  "D 20,545 70,510 150,530 210,630 218,830 205,930 230,1070 290,1120 350,1100 410,1150 440,1270 460,1370 550,1450 600,1515",
];

const townGrey = "#5d6066";
const darkTown = "#43474b";
/* text, x start, width (0 = natural), baseline, size, colour, weight */
const places = [
  ["Water Gap", 902, 161, 786, 31, "#188045", 500],
  ["burg", 778, 57, 945, 29, townGrey],
  ["Hackettstown", 994, 183, 1104, 29, townGrey],
  ["Parsippany-Troy", 1354, 214, 1076, 29, townGrey],
  ["Hills", 1432, 57, 1106, 29, townGrey],
  ["Morristown", 1327, 150, 1174, 29, townGrey],
  ["White Plains", 1967, 177, 887, 31, darkTown],
  ["Stamford", 2192, 134, 864, 31, darkTown],
  ["Norwalk", 2321, 118, 787, 31, darkTown],
  ["THE BRONX", 1908, 118, 1112, 22, "#647687", 500],
  ["MANHATTAN", 1798, 139, 1187, 22, "#647687", 500],
  ["QUEENS", 1985, 85, 1253, 22, "#647687", 500],
  ["BROOKLYN", 1834, 116, 1313, 22, "#647687", 500],
  ["Newark", 1625, 118, 1248, 33, "#34373a"],
  ["New York", 1750, 170, 1276, 38, "#34373a", 500],
  ["Hempstead", 2104, 167, 1283, 31, darkTown],
  ["Hicksville", 2210, 126, 1207, 29, townGrey],
  ["Commack", 2417, 136, 1117, 29, townGrey],
  ["Long Island", 2551, 154, 1182, 30, "#30353a"],
  ["Shirley", 2827, 0, 1166, 29, townGrey],
  ["Bay Shore", 2462, 132, 1260, 29, townGrey],
  ["Fire Island", 2549, 138, 1352, 30, townGrey],
  ["Piscataway", 1342, 152, 1463, 29, townGrey],
  ["Edison", 1417, 98, 1508, 31, darkTown],
  ["Flemington", 984, 149, 1515, 29, townGrey],
  ["Princeton", 1171, 126, 1700, 29, townGrey],
  ["ylestown", 778, 110, 1756, 29, townGrey],
  ["Long Branch", 1766, 166, 1763, 30, townGrey],
];
const interstates = [
  ["80", 986, 1010], ["287", 1520, 997], ["287", 1812, 796], ["287", 1331, 1269], ["80", 1789, 1073], ["95", 1837, 1077],
  ["95", 2066, 989], ["278", 1933, 1142], ["280", 1618, 1175], ["295", 2044, 1209], ["678", 2015, 1295], ["495", 2474, 1155],
  ["78", 925, 1343], ["78", 1412, 1339], ["95", 1471, 1548], ["95", 1436, 1617], ["295", 1129, 1769],
];
const usRoutes = [["46", 939, 1118], ["206", 1219, 1250], ["202", 1166, 1462]];
const stateRoutes = [
  ["23", 1351, 784], ["15", 1275, 887], ["444", 1780, 852], ["17", 1750, 921], ["9A", 1872, 1143], ["25A", 2198, 1140],
  ["25A", 2481, 1025], ["25A", 2851, 985], ["25", 2793, 1063], ["27", 2155, 1331], ["36", 1730, 1597], ["35", 1753, 1653],
  ["", 766, 1250],
];
const pins = [[1882, 1048], [1954, 1046], [2014, 1151], [1829, 1167], [1914, 1198], [1154, 1736], [1769, 1259]];

function Interstate({ n, x, y }) {
  const w = n.length > 2 ? 25 : 19;
  return (
    <g transform={`translate(${x} ${y})`}>
      <path d={`M${-w + 1} -10 L${-w + 2} -18 Q${-w / 2} -13 ${-w / 2 + 2} -18 Q0 -14 0 -19 Q0 -14 ${w / 2 - 2} -18 Q${w / 2} -13 ${w - 2} -18 L${w - 1} -10Z`} fill="#d96262" />
      <path d={`M${-w} -8 H${w} C${w + 1} 8 ${w * 0.6} 15 0 20 C${-w * 0.6} 15 ${-w - 1} 8 ${-w} -8Z`} fill="#3a78c9" />
      <rect x={-w} y="-11" width={2 * w} height="2.4" fill="#fff" />
      <text y="11" textAnchor="middle" fontFamily={MAPFONT} fontWeight="500" fontSize="22.500" fill="#fff">{n}</text>
    </g>
  );
}
function UsRoute({ n, x, y }) {
  const w = n.length > 2 ? 25 : 23;
  return (
    <g transform={`translate(${x} ${y})`}>
      <path d={`M${-w + 4} -19 Q${-w / 2} -14 0 -19 Q${w / 2} -14 ${w - 4} -19 L${w - 1} -12 C${w - 6} -4 ${w + 1} 2 ${w - 1} 8 C${w - 4} 19 8 15 0 20 C-8 15 ${-w + 4} 19 ${-w + 1} 8 C${-w - 1} 2 ${-w + 6} -4 ${-w + 1} -12Z`} fill="#fff" stroke="#676767" strokeWidth="2.6" />
      <text y="8" textAnchor="middle" fontFamily={MAPFONT} fontWeight="500" fontSize="22" fill="#555">{n}</text>
    </g>
  );
}
function StateRoute({ n, x, y }) {
  const w = n.length > 2 ? 50 : 40;
  return (
    <g transform={`translate(${x} ${y})`}>
      <rect x={-w / 2} y="-16.500" width={w} height="33" rx="15.500" fill="#fff" stroke="#676767" strokeWidth="2.4" />
      <text y="8" textAnchor="middle" fontFamily={MAPFONT} fontWeight="500" fontSize="22" fill="#555">{n}</text>
    </g>
  );
}
function Pin({ x, y }) {
  return (
    <g transform={`translate(${x} ${y})`}>
      <path d="M0 1 C18 1 31.500 15 31.500 32 C31.500 56 6 64 3 100 C2 104 -2 104 -3 100 C-6 64 -31.500 56 -31.500 32 C-31.500 15 -18 1 0 1Z" fill="#ea4335" stroke="#fff" strokeWidth="2" />
      <circle cx="0" cy="32" r="11.4" fill="#811411" />
    </g>
  );
}

const roadPath = roads.map(([t, s]) => group(t, s)).join("");
const highwayPath = highways.map(([t, s]) => group(t, s)).join("");
const whitePath = whiteRoads.map(([t, s]) => group(t, s)).join("");
const shape = (list) => list.map((s) => trace(s, true)).join("");

function Terrain() {
  return (
    <svg width="2113" height="1000" viewBox="779 765 2113 1000" style={{ display: "block" }}>
      <rect x="779" y="765" width="2113" height="1000" fill="#f3f2ee" />
      <path d="M779 765H1925L1920 920L1700 940L1620 900L1560 1000L1480 1010L1440 1090L1330 1160H1030L960 1160L900 1120L850 1020L779 1040Z" fill="#ceedcd" />
      <path d="M1550 1000L1590 930L1640 900L1700 950L1760 890L1830 930L1920 900L1920 765H2892V1500H1900L1600 1560L1540 1640L1470 1660L1420 1600L1500 1480L1400 1330L1380 1250L1450 1180L1490 1060Z" fill="#e8e8e8" />
      <g fill="#e8e8e8">
        <path d={patches(5, 26, [1250, 1000, 1560, 1400], 20, 70)} />
        <path d={patches(6, 24, [800, 1000, 1300, 1765], 12, 34)} />
        <path d={patches(8, 24, [1540, 800, 1920, 960], 14, 42)} />
        <path d={patches(9, 22, [1380, 1480, 1680, 1765], 16, 50)} />
      </g>
      <path d={shape(parks)} fill="#ceedcd" />
      <g fill="#f3f2ee">
        <path d={patches(11, 34, [785, 790, 1330, 940], 6, 22)} />
        <path d={patches(13, 62, [785, 930, 1330, 1150], 8, 30)} />
        <path d={patches(12, 22, [1330, 800, 1560, 1080], 6, 18)} />
        <path d={patches(14, 30, [1500, 1600, 1720, 1765], 8, 24)} />
      </g>
      <g fill="#ceedcd">
        <path d={patches(21, 250, [785, 1110, 1240, 1765], 10, 42)} />
        <path d={patches(22, 75, [1200, 1120, 1440, 1765], 8, 32)} />
        <path d={patches(23, 60, [1380, 1040, 1900, 1380], 5, 22)} />
        <path d={patches(24, 70, [1600, 880, 1900, 1000], 6, 34)} />
        <path d={patches(25, 60, [1950, 765, 2160, 960], 6, 28)} />
        <path d={patches(26, 75, [1470, 1590, 1850, 1765], 10, 34)} />
        <path d={patches(27, 90, [2180, 1060, 2892, 1170], 5, 22)} />
        <path d={patches(28, 40, [2180, 1170, 2892, 1300], 4, 18)} />
        <path d={patches(29, 22, [2500, 1020, 2860, 1120], 10, 30)} />
        <path d={patches(30, 14, [2050, 880, 2120, 1080], 6, 18)} />
        <path d={patches(31, 12, [1950, 1200, 2200, 1330], 4, 14)} />
      </g>
      <g fill="#c5e8c5" opacity=".75">
        <path d={patches(41, 36, [785, 770, 1900, 1130], 12, 40)} />
        <path d={patches(42, 22, [785, 1200, 1400, 1760], 10, 30)} />
        <path d={patches(43, 14, [2200, 1000, 2880, 1150], 8, 22)} />
      </g>
      <path d={shape(deepParks)} fill="#b5e2b6" />
      <g fill="none" stroke="#fff" strokeWidth="2" strokeLinejoin="round" strokeLinecap="round">
        <path d={lanes(51, 100, [780, 800, 1380, 1160], 22)} />
        <path d={lanes(52, 170, [780, 1160, 1440, 1765], 22)} />
        <path d={lanes(53, 44, [1500, 1590, 1840, 1765], 20)} />
        <path d={lanes(54, 20, [2090, 765, 2240, 860], 18)} />
        <path d={lanes(55, 16, [1460, 920, 1600, 1260], 20)} />
        <path d={whitePath} strokeWidth="2.6" />
      </g>
      <path d={shape(water)} fill="#aadaff" />
      {islands.map(([c, s], i) => <path key={i} d={trace(s, true)} fill={c} />)}
      <path d={trace(dashed[3])} fill="none" stroke="#aadaff" strokeWidth="3.4" />
      <path d={trace(dashed[0])} fill="none" stroke="#aadaff" strokeWidth="3" />
      <path d={group("E", causeways)} fill="none" stroke="#fff" strokeWidth="2.6" />
      <g fill="none" strokeLinejoin="round" strokeLinecap="round">
        <path d={roadPath} stroke="#f7d57a" strokeWidth="6.6" />
        <path d={highwayPath} stroke="#f5cd69" strokeWidth="9" />
        <path d={roadPath} stroke="#ffeda3" strokeWidth="4" />
        <path d={highwayPath} stroke="#ffe598" strokeWidth="5.8" />
      </g>
      <g fill="none" stroke="#9a9ca3" strokeWidth="1.8" strokeDasharray="6 5">
        {dashed.map((s, i) => <path key={i} d={trace(s)} />)}
      </g>
      <g fontFamily={MAPFONT}>
        {places.map(([t, x, w, y, size, c, wt]) => (
          <text key={t} x={x} y={y} fontSize={size} fill={c} fontWeight={wt || 400} stroke="#fff" strokeOpacity=".85" strokeWidth="5" strokeLinejoin="round" paintOrder="stroke" {...(w ? { textLength: w, lengthAdjust: "spacingAndGlyphs" } : {})}>{t}</text>
        ))}
        <text transform="translate(2563 1316) rotate(-12)" fontSize="28" fill="#4e82c6" textLength="196" lengthAdjust="spacingAndGlyphs">Great South Bay</text>
        <text transform="translate(2740 836) rotate(-15.500)" fontSize="29" fill="#4e82c6">Long Island Sound</text>
      </g>
      {usRoutes.map(([n, x, y]) => <UsRoute key={n + x} n={n} x={x} y={y} />)}
      {stateRoutes.map(([n, x, y]) => <StateRoute key={n + x} n={n} x={x} y={y} />)}
      {interstates.map(([n, x, y]) => <Interstate key={n + x} n={n} x={x} y={y} />)}
      {pins.map(([x, y]) => <Pin key={x} x={x} y={y} />)}
      <text x="795" y="1745" fontFamily="Lato, sans-serif" fontWeight="700" fontSize="51" textLength="155" lengthAdjust="spacingAndGlyphs" stroke="#fff" strokeWidth="4" paintOrder="stroke">
        <tspan fill="#4285f4">G</tspan><tspan fill="#ea4335">o</tspan><tspan fill="#fbbc04">o</tspan><tspan fill="#4285f4">g</tspan><tspan fill="#34a853">l</tspan><tspan fill="#ea4335">e</tspan>
      </text>
    </svg>
  );
}

function GoogleMap() {
  return (
    <MapBox>
      <Terrain />
      <TypeControl $top={25}>
        <MapType $on $w={205}><Fit w={88}>Map</Fit></MapType>
        <MapType $w={277}><Fit w={162}>Satellite</Fit></MapType>
      </TypeControl>
      <SideControl $top={25}>
        <svg width="46" height="46" viewBox="0 0 46 46" fill="none" stroke="#666" strokeWidth="5.4">
          <path d="M2.7 15V2.7H16M30 2.7H43.3V15M43.3 31V43.3H30M16 43.3H2.7V31" />
        </svg>
      </SideControl>
      <SideControl $top={557}>
        <svg width="46" height="78" viewBox="0 0 46 78" fill="#fbbc2d" stroke="#70706c" strokeWidth="2">
          <path d="M10 26 L3 50 Q2 55 8 55 L11 44 L12 75 H20.500 L22.500 56 L24.500 75 H33 L34 44 L38 55 Q44 54 43 50 L36 26 Q34 24 30 24 H16 Q12 24 10 26Z" />
          <path d="M15 25H30L22.500 39Z" fill="#e4812e" stroke="none" />
          <circle cx="22.500" cy="13.500" r="12.500" />
        </svg>
      </SideControl>
      <SideControl $top={737} $h={203}>
        <ZoomHalf><svg width="46" height="46"><path d="M0.500 18H18V0.500H28V18H45.500V28H28V45.500H18V28H0.500Z" fill="#666" /></svg></ZoomHalf>
        <ZoomRule />
        <ZoomHalf><svg width="46" height="46"><path d="M0.500 18H45.500V28H0.500Z" fill="#666" /></svg></ZoomHalf>
      </SideControl>
      <Credits>
        <Credit $c="#b3000c"><Fit w={271}>Map data ©2020 Google</Fit></Credit>
        <Credit $c="#444"><Fit w={148}>Terms of Use</Fit></Credit>
      </Credits>
    </MapBox>
  );
}

function Logo() {
  return (
    <svg width="192" height="160" viewBox="44 141 192 160" fill="none" stroke="#f15a24">
      <circle cx="139.600" cy="199.500" r="49.500" strokeWidth="3" />
      <path d="M104 216 C96 186 112 156 140 153 C152 152 160 156 166 162" strokeWidth="3" />
      <path d="M173 180 C184 208 168 240 140 245 C130 246 122 244 114 238" strokeWidth="3" />
      <path d="M116 160 C128 151 146 148 160 157 M164 237 C152 247 134 250 120 242" strokeWidth="3.400" />
      <path d="M104 216 L137 187" strokeWidth="4.600" />
      <path d="M173 180 L134 213" strokeWidth="4.600" />
      <ellipse cx="125" cy="220" rx="9.500" ry="13.500" transform="rotate(42 125 220)" fill="#f15a24" stroke="none" />
      <path d="M131 187 C131 180 136 180 140 176 L150 186 C146 188 143 193 136 192Z" fill="#f15a24" stroke="none" />
      <path d="M141 178L153 167M144 181L156 169M147 184L159 172M149 186L161 174" strokeWidth="1.800" />
      <g fill="#f15a24" stroke="#f15a24" strokeWidth=".6" fontFamily="'DejaVu Serif', serif">
        <text x="68" y="273" fontSize="19" textLength="142" lengthAdjust="spacingAndGlyphs">Get Meals</text>
        <text x="49" y="289" fontSize="14.500" textLength="181" lengthAdjust="spacingAndGlyphs">Never go hungry</text>
      </g>
    </svg>
  );
}

/* ---------- taskbar ---------- */
const Taskbar = styled.div`
  height: 80px;
  flex: none;
  background: #101010;
  display: flex;
  color: #fff;
`;
const Start = styled.div`
  width: 96px;
  display: flex;
  align-items: center;
  justify-content: center;
`;
const SearchBox = styled.div`
  width: 688px;
  background: #3f3f3f;
  display: flex;
  align-items: center;
  padding: 0 26px 0 19px;
  color: #adadad;
  font-size: 28px;
  line-height: 80px;
`;
const Ring = styled.i`
  width: 42px;
  height: 42px;
  border-radius: 50%;
  border: 6px solid #fff;
  box-shadow: inset 0 0 0 1px #aaa, 0 0 0 1px #999;
  margin-right: 20px;
`;
const Apps = styled.div`
  display: flex;
`;
const AppSlot = styled.div`
  width: 98.3px;
  flex: none;
  height: 80px;
  display: flex;
  align-items: center;
  justify-content: center;
  ${(p) => p.$active && "background: linear-gradient(#333, #333) no-repeat 1px 0 / 95px 80px;"}
  ${(p) => p.$open && "border-bottom: 4px solid #76b9ed; border-top: 4px solid transparent; background-clip: border-box;"}
  ${(p) => p.$narrow && "width: 80.3px; margin: 0 9px;"}
`;
const Tray = styled.div`
  flex: 1;
  display: flex;
  align-items: center;
  padding-left: 80px;
`;
const TrayText = styled.span`
  font-size: ${(p) => p.$size || 24}px;
  line-height: 38px;
  margin-top: ${(p) => p.$mt || 0}px;
  margin-left: ${(p) => p.$ml || 0}px;
  display: flex;
  flex-direction: column;
`;
const TrayIcon = styled.span`
  width: 64px;
  display: flex;
  justify-content: center;
  margin-left: ${(p) => p.$ml || 0}px;
`;
const Notice = styled.span`
  position: relative;
  margin-left: 43px;
  width: 50px;
  height: 60px;
  padding-top: 14px;
`;
const Badge = styled.span`
  position: absolute;
  left: 12px;
  top: 23px;
  width: 37px;
  height: 34px;
  border-radius: 50%;
  background: rgba(60, 60, 60, 0.92);
  border: 2px solid #999;
  font-size: 22px;
  line-height: 29px;
  text-align: center;
`;
const ShowDesktop = styled.i`
  width: 10px;
  height: 80px;
  margin-left: auto;
  border-left: 2px solid #6a6a6a;
  background: #262626;
`;

const Outlook = () => (
  <svg width="48" height="44" viewBox="0 0 48 44">
    <rect x="14" y="1" width="32" height="28" fill="#0a64b4" /><rect x="14" y="7" width="11" height="22" fill="#1483d8" /><rect x="25" y="7" width="11" height="12" fill="#28a8ea" /><rect x="36" y="7" width="10" height="12" fill="#50d9ff" />
    <path d="M12 22L30 32L47 22V43H12Z" fill="#1a8fe3" /><path d="M47 22L30 33L12 43H47Z" fill="#35b8f1" />
    <rect x="1" y="10" width="24" height="24" rx="2" fill="#0f6cbd" />
    <text x="13" y="29" fontFamily="Open Sans, sans-serif" fontSize="19" fontWeight="700" textAnchor="middle" fill="#fff">O</text>
  </svg>
);
const Folder = () => (
  <svg width="44" height="38" viewBox="0 0 44 38">
    <path d="M1 2H17L22 6H43V35H1Z" fill="#ffe694" /><path d="M1 2H17L21 7L17 9H1Z" fill="#f7c52c" /><rect x="4" y="4" width="9" height="2" fill="#fff" />
    <path d="M8 37V19H36V37H29V28H15V37Z" fill="#3ab5ea" />
  </svg>
);
const Excel = () => (
  <svg width="48" height="44" viewBox="0 0 48 44">
    <rect x="12" y="1" width="35" height="42" fill="#21a366" /><rect x="29" y="1" width="18" height="11" fill="#33c481" /><rect x="12" y="22" width="35" height="21" fill="#185c37" /><rect x="29" y="22" width="18" height="10" fill="#107c41" />
    <rect x="1" y="10" width="24" height="24" rx="2" fill="#107c41" />
    <text x="13" y="29" fontFamily="Open Sans, sans-serif" fontSize="20" fontWeight="700" textAnchor="middle" fill="#fff">X</text>
  </svg>
);
const Slack = () => (
  <svg width="46" height="46" viewBox="0 0 46 46">
    <circle cx="23" cy="23" r="23" fill="#fff" />
    <g strokeWidth="6" strokeLinecap="round">
      <path d="M19 10V10.1M10 18.500H19" stroke="#36c5f0" /><path d="M27.500 10V19M36 18.500V18.600" stroke="#2eb67d" />
      <path d="M27.500 27.500H36M27.500 36V36.100" stroke="#ecb22e" /><path d="M19 27.500V36M10 27.500V27.600" stroke="#e01e5a" />
    </g>
  </svg>
);
const Edge = () => (
  <svg width="42" height="44" viewBox="0 0 42 44">
    <path d="M2 20 C4 6 13 1 22 1 C34 1 41 10 41 21 V26 H14 C15 34 22 36 28 36 C33 36 36 34 38 33 V41 C34 43 30 44 25 44 C13 44 6 37 6 27 C6 21 9 15 16 12 C14 14 13 17 13 19 H29 C29 14 27 10 21 10 C12 10 5 14 2 20Z" fill="#0078d7" />
  </svg>
);
const Chrome = () => (
  <svg width="46" height="46" viewBox="0 0 46 46">
    <circle cx="23" cy="23" r="22.500" fill="#ffcd40" />
    <path d="M23 23L3.500 11.700A22.500 22.500 0 0 1 42.500 12Z" fill="#db4437" /><path d="M23 23L3.500 11.700A22.500 22.500 0 0 0 22 45.500L33 28Z" fill="#0f9d58" />
    <path d="M23 12.500H42.700A22.500 22.500 0 0 1 22 45.500L32 28Z" fill="#ffcd40" />
    <circle cx="23" cy="23" r="10.500" fill="#f1f1f1" /><circle cx="23" cy="23" r="8.300" fill="#4285f4" />
  </svg>
);
const VsCode = () => (
  <svg width="48" height="48" viewBox="0 0 48 48">
    <path d="M35 1L47 6V42L35 47Z" fill="#24a5ef" /><path d="M35 1L4 29L1 31V33L5 35L35 12Z" fill="#1489d0" /><path d="M35 47L4 19L1 17V15L5 13L35 36Z" fill="#0f70b3" /><path d="M35 1V47L31 46V2Z" fill="#1e9ae6" />
  </svg>
);
const Cmd = () => (
  <svg width="48" height="40" viewBox="0 0 48 40">
    <rect x="1" y="1" width="46" height="38" fill="#050505" stroke="#9a9a9a" strokeWidth="2" /><rect x="1" y="1" width="46" height="4" fill="#d6d9dd" /><path d="M2 26Q20 14 46 12V6H2Z" fill="#2b2b2b" />
    <path d="M4 7H9V10H4Z" fill="#aaa" />
  </svg>
);
const Git = () => (
  <svg width="48" height="48" viewBox="0 0 48 48">
    <path d="M24 0L35 12L24 21L13 12Z" fill="#ff7b7b" /><path d="M12 13L22 24L12 35L0 24Z" fill="#80b3ff" /><path d="M36 13L48 24L36 35L26 24Z" fill="#8dd35f" /><path d="M24 27L35 36L24 48L13 36Z" fill="#ffe680" />
    <path d="M20 10L26 17V35M26 22L34 27" stroke="#2b1100" strokeWidth="4" fill="none" /><circle cx="26" cy="17" r="4" fill="#2b1100" /><circle cx="26" cy="34" r="4.500" fill="#2b1100" /><circle cx="34" cy="27" r="4.500" fill="#2b1100" />
  </svg>
);
const Postman = () => (
  <svg width="48" height="48" viewBox="0 0 48 48">
    <circle cx="24" cy="24" r="23" fill="#ff6c37" stroke="#fff" strokeWidth="2" />
    <circle cx="34" cy="13" r="4.500" fill="#ff6c37" stroke="#fff" strokeWidth="2" /><path d="M31 16L16 28L14 36L22 31L33 21Z" fill="#fff" /><path d="M30 19L18 30" stroke="#ff6c37" strokeWidth="1.500" />
  </svg>
);
const CloudScreen = () => (
  <svg width="44" height="42" viewBox="0 0 44 42">
    <rect x="1" y="1" width="42" height="32" rx="3" fill="#76c442" /><path d="M5 25H39C41 19 37 17 34 16C33 7 25 3 18 8C13 8 11 13 11 16C5 16 3 21 5 25Z" fill="#fff" /><path d="M15 35H29L32 41H12Z" fill="#5ca82e" />
  </svg>
);
const Beaver = () => (
  <svg width="48" height="48" viewBox="0 0 48 48">
    <circle cx="24" cy="24" r="23.500" fill="#fff" />
    <path d="M9 11C5 20 5 32 12 42C18 38 17 20 9 11Z" fill="#382923" /><path d="M14 42C18 40 19 26 24 20C22 12 25 6 31 6C38 8 38 14 36 18C40 26 39 38 33 42C28 44 20 44 14 42Z" fill="#4a372f" /><path d="M27 20C25 28 25 35 28 40" stroke="#c9b8a8" strokeWidth="1.600" fill="none" />
    <path d="M16 12Q20 4 29 5" stroke="#382923" strokeWidth="2" fill="none" />
  </svg>
);
const Paint = () => (
  <svg width="46" height="46" viewBox="0 0 46 46">
    <path d="M23 3C10 4 1 20 1 33C1 38 6 40 9 37C13 34 14 38 13 41C16 46 30 44 38 33C46 20 42 5 23 3Z" fill="#bfe0f5" stroke="#7fa9c9" />
    <circle cx="8" cy="25" r="4" fill="#e2412f" /><circle cx="15" cy="18" r="4" fill="#6dbb3a" /><circle cx="24" cy="14" r="4.500" fill="#f2b12b" /><circle cx="18" cy="28" r="2.600" fill="#222" />
    <path d="M35 14L22 45" stroke="#d9822b" strokeWidth="4" /><path d="M33 14C31 8 36 4 41 0C45 4 44 12 37 15Z" fill="#d6a66f" />
  </svg>
);
const TaskView = () => (
  <svg width="34" height="32" viewBox="0 0 34 32" fill="none" stroke="#fff" strokeWidth="2.400">
    <path d="M2 1V6H23V1M2 11H23V21H2ZM2 31V26H23V31M30 1V31" /><rect x="27.500" y="9" width="5" height="5" fill="#fff" stroke="none" />
  </svg>
);

export default function App() {
  return (
    <Screen>
      <Global />
      <TabStrip>
        <Tab>
          <Favicon><Fit w={24}>GM</Fit></Favicon>
          <TabTitle><Fit w={107}>Get Meals</Fit></TabTitle>
          <Grow />
          <svg width="17" height="17" stroke="#fff" strokeWidth="3"><path d="M1 1L16 16M16 1L1 16" /></svg>
        </Tab>
        <NewTab><svg width="26" height="26" stroke="#c2c4c6" strokeWidth="3.600"><path d="M13 1V25M1 13H25" /></svg></NewTab>
        <Grow />
        <WindowButtons>
          <WindowButton><svg width="22" height="22" stroke="#fff" strokeWidth="2"><path d="M1 11H21" /></svg></WindowButton>
          <WindowButton><svg width="22" height="22" stroke="#fff" strokeWidth="2" fill="none"><path d="M2 6H16V20H2ZM6 6V2H20V16H16" /></svg></WindowButton>
          <WindowButton><svg width="22" height="22" stroke="#fff" strokeWidth="2"><path d="M1 1L21 21M21 1L1 21" /></svg></WindowButton>
        </WindowButtons>
      </TabStrip>
      <Toolbar>
        <ToolButton><svg width="28" height="28" stroke="#85868a" strokeWidth="3" fill="none"><path d="M27 14H3M14 2L2 14L14 26" /></svg></ToolButton>
        <ToolButton><svg width="28" height="28" stroke="#85868a" strokeWidth="3" fill="none"><path d="M1 14H25M14 2L26 14L14 26" /></svg></ToolButton>
        <ToolButton><svg width="28" height="28" fill="none" stroke="#f1f3f4" strokeWidth="3.200"><path d="M25 19A11.800 11.800 0 1 1 22 5.500" /><path d="M28 1V12H17Z" fill="#f1f3f4" stroke="none" /></svg></ToolButton>
        <UrlBar>
          <svg width="18" height="24" viewBox="0 0 18 24"><rect x="1" y="8" width="16" height="14" rx="2" fill="#e8eaed" /><path d="M4.500 9V6A4.500 4.500 0 0 1 13.500 6V9" fill="none" stroke="#e8eaed" strokeWidth="2.400" /></svg>
          <Fit w={275}>get-meals-app.now.sh</Fit>
          <Grow />
          <UrlIcons>
            <svg width="30" height="30" fill="none" stroke="#bfc1c4" strokeWidth="2.800"><circle cx="12" cy="12" r="9.500" /><path d="M19 19L27 27" strokeWidth="4" /><path d="M12 7.500V16.500M7.500 12H16.500" strokeWidth="2" /></svg>
            <svg width="32" height="30" viewBox="0 0 32 30" fill="none" stroke="#c6c8ca" strokeWidth="2.600"><path d="M16 3L19.500 11.500L28.500 12.200L21.600 18L23.800 27L16 22L8.200 27L10.400 18L3.500 12.200L12.500 11.500Z" /></svg>
          </UrlIcons>
        </UrlBar>
        <Incognito>
          <svg width="44" height="44" viewBox="0 0 44 44"><circle cx="22" cy="22" r="22" fill="#f1f3f4" /><path d="M14 18L17 8.500Q22 11 27 8.500L30 18Z" fill="#35363a" /><path d="M8 20.500H36" stroke="#35363a" strokeWidth="2" /><g fill="none" stroke="#35363a" strokeWidth="1.800"><circle cx="15.500" cy="29" r="4.700" /><circle cx="28.500" cy="29" r="4.700" /><path d="M20 28Q22 26.500 24 28" /></g></svg>
          <Fit w={101}>Incognito</Fit>
        </Incognito>
        <Dots><Dot /><Dot /><Dot /></Dots>
      </Toolbar>

      <Viewport>
        <Page>
          <Header>
            <Logo />
            <Nav>
              <Fit w={107}>Home</Fit>
              <Fit w={233}>Add Location</Fit>
              <Fit w={164}>About Us</Fit>
            </Nav>
          </Header>
          <Main>
            <Title><Fit w={746}>Welcome to Get Meals</Fit></Title>
            <Para><Fit w={1427}>A platform to find and share locations serving food and meals to those in need.</Fit></Para>
            <Para>
              <Fit w={2804}>Enter your location on the left to find places serving free food near you. Or, click on the "Add Location" in the nav bar above to report a place that you know</Fit>
              <Fit w={361}>is serving free food.</Fit>
            </Para>
            <Para $gap={42}><Fit w={860}>Let's all do our part in letting no one go hungry.</Fit></Para>
            <Columns>
              <Card>
                <CardLabel>
                  <Fit w={553}>Search by address, city, or zip</Fit>
                  <Fit w={101}>code:</Fit>
                </CardLabel>
                <Field><Fit w={238}>New York, NY</Fit></Field>
                <SearchButton><Fit w={117}>Search</Fit></SearchButton>
              </Card>
              <GoogleMap />
            </Columns>
          </Main>
          <Footer>
            <Fit w={612}>Thinkful Fullstack Capstone Project</Fit>
            <FooterLink><Fit w={164}>About Us</Fit></FooterLink>
          </Footer>
        </Page>
        <Scrollbar>
          <Arrow $up />
          <Thumb />
          <Arrow />
        </Scrollbar>
      </Viewport>

      <Taskbar>
        <Start><svg width="32" height="32" viewBox="0 0 32 32" fill="#fff"><path d="M0 5L13 3V15H0ZM14.500 2.800L32 0V15H14.500ZM0 16.500H13V29L0 27ZM14.500 16.500H32V32L14.500 29Z" /></svg></Start>
        <SearchBox>
          <Ring />
          <Fit w={246}>Type here to search</Fit>
          <Grow />
          <svg width="32" height="34" viewBox="0 0 32 34" fill="none" stroke="#a0a0a0" strokeWidth="2"><rect x="11" y="1" width="11" height="23" rx="5.500" /><path d="M6 16V20Q6 28 16.500 28Q27 28 27 20V16M16.500 28V33M12 33H21" /></svg>
        </SearchBox>
        <Apps>
          <AppSlot><TaskView /></AppSlot>
          <AppSlot><Outlook /></AppSlot>
          <AppSlot><Folder /></AppSlot>
          <AppSlot><Excel /></AppSlot>
          <AppSlot><Slack /></AppSlot>
          <AppSlot><Edge /></AppSlot>
          <AppSlot $active $open><Chrome /></AppSlot>
          <AppSlot $open $narrow><VsCode /></AppSlot>
          <AppSlot><Cmd /></AppSlot>
          <AppSlot><Git /></AppSlot>
          <AppSlot><Postman /></AppSlot>
          <AppSlot><CloudScreen /></AppSlot>
          <AppSlot><Beaver /></AppSlot>
          <AppSlot $open $narrow><Paint /></AppSlot>
        </Apps>
        <Tray>
          <TrayText $size={22} $mt={-46}><Fit w={28}>EN</Fit></TrayText>
          <TrayIcon $ml={18}><svg width="26" height="15" fill="none" stroke="#fff" strokeWidth="2.200"><path d="M1 14L13 2L25 14" /></svg></TrayIcon>
          <TrayIcon><svg width="34" height="34" fill="none" stroke="#fff" strokeWidth="2"><path d="M2 6L32 2V31L2 28Z" /><path d="M9 13Q16 6 19 14L12 18M9 20Q12 26 19 22" strokeWidth="3" stroke="#ccc" /><circle cx="24" cy="24" r="9" fill="#d8232a" stroke="none" /><path d="M24 18V25M24 27.500V30" strokeWidth="2.600" /></svg></TrayIcon>
          <TrayIcon><svg width="32" height="26" fill="none" stroke="#fff" strokeWidth="2"><path d="M9 21V23H29V6H11M29 11H31V18H29" /><path d="M12 9H26V20H12Z" fill="#fff" /><path d="M3 1V6M8 1V6M1 6H10V10Q10 13 5.500 13Q1 13 1 10ZM5.500 13V20" /></svg></TrayIcon>
          <TrayIcon><svg width="34" height="30" fill="none" stroke="#fff" strokeWidth="2"><path d="M2 10V20H6L13 27V3L6 10Z" /><path d="M18 10Q21 15 18 20M22 6Q28 15 22 24" /><path d="M27 2Q36 15 27 28" stroke="#666" /></svg></TrayIcon>
          <TrayIcon $ml={2}><svg width="26" height="26" fill="none" stroke="#fff" strokeWidth="2.200"><path d="M1 25Q2 3 25 2M7 25Q8 9 25 8M13 25Q13 15 25 14" /><circle cx="22" cy="23" r="3" fill="#fff" stroke="none" /></svg></TrayIcon>
          <TrayIcon $ml={5}><svg width="34" height="34" fill="none" stroke="#fff" strokeWidth="2"><path d="M12 28L11 22L21 3Q25 0 27 5L18 24ZM9 18Q1 20 2 27Q4 34 11 30M27 12Q35 13 32 18L24 21" /></svg></TrayIcon>
          <TrayText $ml={23} $mt={-2}><Fit w={45}>ENG</Fit></TrayText>
          <TrayText $ml={32} $mt={0}><Fit w={97}>10:14 PM</Fit><Fit w={96}>5/8/2020</Fit></TrayText>
          <Notice>
            <svg width="34" height="32" viewBox="0 0 34 32"><path d="M0 0H33V25H15L11 31V25H0Z" fill="#fff" /><path d="M6 7H27M6 13H27M6 19H16" stroke="#101010" strokeWidth="2" /></svg>
            <Badge>21</Badge>
          </Notice>
          <ShowDesktop />
        </Tray>
      </Taskbar>
    </Screen>
  );
}
